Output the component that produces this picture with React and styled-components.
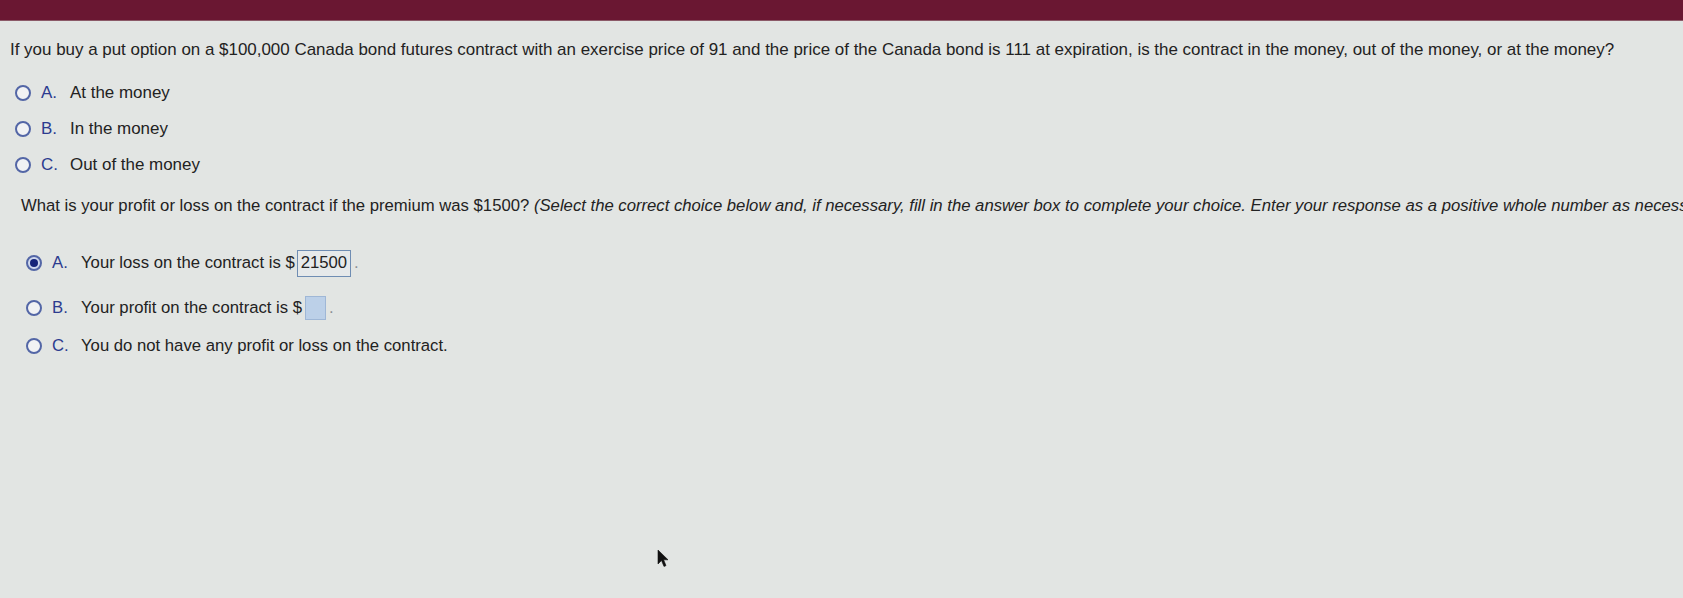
import React from "react";
import styled, { createGlobalStyle } from "styled-components";

const Global = createGlobalStyle`
  html, body { margin: 0; padding: 0; }
  body {
    background: #e2e5e3;
    font-family: "Liberation Sans", Arial, sans-serif;
    color: #222;
    overflow: hidden;
  }
`;

const Page = styled.div`
  position: relative;
  width: 1683px;
  height: 598px;
  overflow: hidden;
  background: #e2e5e3;
`;

const TopBar = styled.div`
  height: 20px;
  background: #6a1732;
  border-bottom: 1px solid #8b5a68;
`;

const Section = styled.div`
  padding-left: ${(p) => p.$indent}px;
  padding-top: ${(p) => p.$top}px;
  font-size: ${(p) => p.$size}px;
`;

const Question = styled.div`
  line-height: 20px;
  white-space: nowrap;
  color: #222;
`;

const Italic = styled.span`
  font-style: italic;
`;

const Options = styled.div`
  display: flex;
  flex-direction: column;
  margin-top: ${(p) => p.$top}px;
`;

const Row = styled.div`
  display: flex;
  align-items: center;
  height: ${(p) => p.$h}px;
  padding-left: 5px;
`;

const Radio = styled.span`
  box-sizing: border-box;
  width: 16px;
  height: 16px;
  border-radius: 50%;
  border: 2px solid #5366a6;
  background: ${(p) => (p.$checked ? "#cfd8ee" : "#f1f2f4")};
  display: flex;
  align-items: center;
  justify-content: center;
  flex: none;
  &::after {
    content: "";
    display: ${(p) => (p.$checked ? "block" : "none")};
    width: 8px;
    height: 8px;
    border-radius: 50%;
    background: #16247a;
  }
`;

const Letter = styled.span`
  width: 29px;
  margin-left: 10px;
  color: #2c3b8f;
  flex: none;
`;

const Text = styled.span`
  display: flex;
  align-items: center;
  white-space: nowrap;
  color: #222;
`;

const AnswerBox = styled.span`
  box-sizing: border-box;
  display: inline-flex;
  align-items: center;
  height: 27px;
  padding: 0 3px;
  margin-left: 2px;
  border: 1.5px solid #6f8db3;
  background: #e6e9ea;
  color: #222;
`;

const EmptyBox = styled.span`
  box-sizing: border-box;
  display: inline-block;
  width: 21px;
  height: 24px;
  margin-left: 3px;
  border: 1px solid #9fb7d6;
  background: #bcd0e8;
`;

const Dot = styled.span`
  color: #8a8f95;
  margin-left: 3px;
`;

const Cursor = styled.svg`
  position: absolute;
  left: 657px;
  top: 549px;
`;

function Option({ letter, checked, h, children }) {
  return (
    <Row $h={h}>
      <Radio $checked={checked} />
      <Letter>{letter}</Letter>
      <Text>{children}</Text>
    </Row>
  );
}

export default function App() {
  return (
    <Page>
      <Global />
      <TopBar />
      <Section $indent={10} $top={19} $size={16.95}>
        <Question>
          If you buy a put option on a $100,000 Canada bond futures contract with an exercise price of 91 and the price of the Canada bond is 111 at expiration, is the contract in the money, out of the money, or at the money?
        </Question>
        <Options $top={15}>
          <Option letter="A." h={36}>At the money</Option>
          <Option letter="B." h={36}>In the money</Option>
          <Option letter="C." h={36}>Out of the money</Option>
        </Options>
      </Section>
      <Section $indent={21} $top={13} $size={16.7}>
        <Question>
          What is your profit or loss on the contract if the premium was $1500?{" "}
          <Italic>
            (Select the correct choice below and, if necessary, fill in the answer box to complete your choice. Enter your response as a positive whole number as necessary.)
          </Italic>
        </Question>
        <Options $top={24}>
          <Option letter="A." checked h={46}>
            Your loss on the contract is $<AnswerBox>21500</AnswerBox>
            <Dot>.</Dot>
          </Option>
          <Option letter="B." h={44}>
            Your profit on the contract is $<EmptyBox />
            <Dot>.</Dot>
          </Option>
          <Option letter="C." h={32}>
            You do not have any profit or loss on the contract.
          </Option>
        </Options>
      </Section>
      <Cursor width="12" height="19" viewBox="0 0 12 19">
        <path d="M1 1 L1 15 L4.5 11.5 L7 17.5 L9 16.6 L6.6 10.8 L11 10.8 Z" fill="#111" stroke="#111" strokeWidth="0.6" strokeLinejoin="round" />
      </Cursor>
    </Page>
  );
}
